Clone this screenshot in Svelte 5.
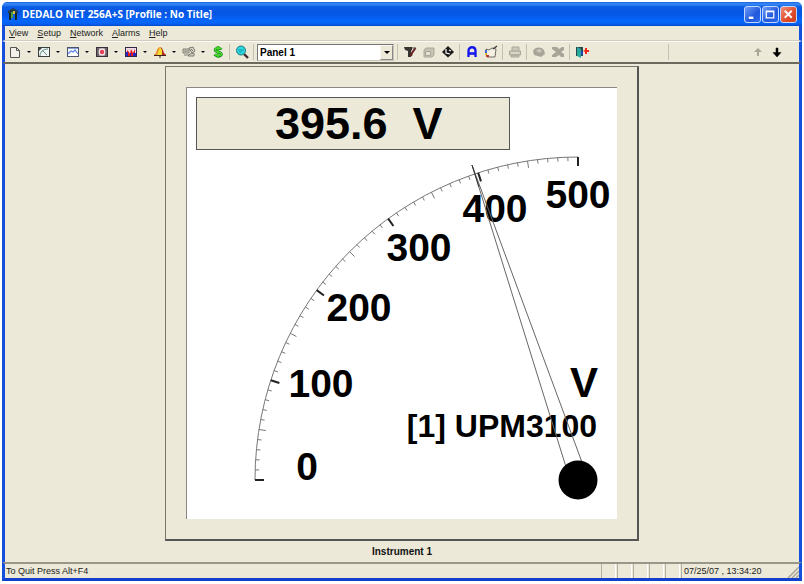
<script>
  const menus = ['View', 'Setup', 'Network', 'Alarms', 'Help'];
  const splits = ['page', 'meter', 'trend', 'scope', 'bars', 'bell', 'devices'];
  const panels = ['Panel 1', 'Panel 2', 'Panel 3'];
  let panel = $state('Panel 1');

  const cx = 578;
  const cy = 480;
  const r = 323;
  const labels = [
    { text: '0', x: 307, y: 480 },
    { text: '100', x: 321, y: 397 },
    { text: '200', x: 359, y: 321 },
    { text: '300', x: 419, y: 261 },
    { text: '400', x: 495, y: 222 },
    { text: '500', x: 578, y: 208 }
  ];
  const ticks = Array.from({ length: 51 }, (_, i) => {
    const a = (i / 50) * (Math.PI / 2);
    const major = i % 10 === 0;
    const len = major ? 9 : i % 5 === 0 ? 7 : 4;
    return {
      major,
      x1: cx - r * Math.cos(a),
      y1: cy - r * Math.sin(a),
      x2: cx - (r - len) * Math.cos(a),
      y2: cy - (r - len) * Math.sin(a)
    };
  });
</script>

{#snippet icon(name)}
  <svg class="icon" viewBox="0 0 14 14" aria-hidden="true">
    {#if name === 'page'}
      <path d="M2.500 2.500h6l3 3v7h-9z" fill="#f4f2e8" stroke="#555" />
      <path d="M8.500 2.500v3h3" fill="none" stroke="#555" />
    {:else if name === 'meter'}
      <rect x="1.5" y="2.5" width="11" height="9" fill="#f4f8f4" stroke="#3c4040" />
      <path d="M3 11C3 7 6 4 11 4M5 5l5 5" fill="none" stroke="#5b8a88" />
      <path d="M2 3h3L2 6z" fill="#444" />
    {:else if name === 'trend'}
      <rect x="1.5" y="2.5" width="11" height="9" fill="#fff" stroke="#4a5570" />
      <path d="M2 3.5h10" stroke="#8ca0d0" />
      <path d="M2 9l3-3 2 1 2-2 3 4" fill="none" stroke="#5a82e8" stroke-width="1.2" />
    {:else if name === 'scope'}
      <rect x="1.5" y="2.5" width="11" height="9" fill="#a09ba0" stroke="#3a3038" />
      <path d="M3 3v8M11 3v8" stroke="#3a3038" />
      <circle cx="7" cy="7" r="3.4" fill="#fbe8ea" />
      <circle cx="7" cy="7" r="2.2" fill="#e84058" />
    {:else if name === 'bars'}
      <rect x="1.5" y="2.5" width="11" height="9" fill="#f0d8e4" stroke="#302848" />
      <path d="M3 11V5l2 2 1 2 1-5 2 4 2-4v7z" fill="#e81818" />
      <path d="M2 7h2v4H2zM6 8h1v3H6zM9 8h3v3H9z" fill="#2828c0" />
    {:else if name === 'bell'}
      <path d="M7 2C4 3 4 6 3 8l-2 2h12l-2-2c-1-2-1-5-4-6z" fill="#f4dc30" />
      <path d="M7 2C4 3 4 6 3 8l-2 2h3z" fill="#e88a30" />
      <path d="M7 2c3 1 3 4 4 6l2 2H9V5z" fill="#b82828" />
      <path d="M1 10.500h12M6 12h2" stroke="#402020" />
    {:else if name === 'devices'}
      <path d="M1 4h6v4H1zM2 10h5M7 3l4-1 2 4-3 2zM8 9l4-1v3H6z" fill="#d8d5c5" stroke="#7c7c72" />
      <path d="M2 6h4M9 4l2 2" stroke="#7c7c72" />
    {:else if name === 'dollar'}
      <path d="M10.5 4.5C9.5 3 4 2.500 4 5s6.500 1.500 6.500 4.200S5 11.500 3.500 9.500M7 1v12" fill="none" stroke="#187828" stroke-width="2.600" />
      <path d="M10.5 4C9.500 2.500 4 2.500 4 5s6.500 1.500 6.500 4S5 11 3.500 9M7 1v12" fill="none" stroke="#48d828" stroke-width="1.500" />
    {:else if name === 'find'}
      <path d="M9 9l4 4" stroke="#402830" stroke-width="2.400" />
      <circle cx="6" cy="5.500" r="4.500" fill="#30d8e0" stroke="#187880" />
      <path d="M3 5h6M4 7h3" stroke="#0c9cac" />
    {:else if name === 'filter'}
      <path d="M1 2h8v3L8 6v6H5V6L2 5z" fill="#383430" />
      <path d="M12.500 3L9 8l-1 3" fill="none" stroke="#682020" stroke-width="2" />
      <path d="M9 3h4" stroke="#504840" />
    {:else if name === 'cube'}
      <path d="M2 5l2-2h8v7l-2 2H2z" fill="#c6c3b5" stroke="#aaa799" />
      <path d="M3.500 6.500h5v4h-5z" fill="#e4e1d2" stroke="#aaa799" />
    {:else if name === 'diamond'}
      <path d="M7 1l6 6-6 5.500L1 7z" fill="#181818" />
      <path d="M5 4v4l4 1M8 5l2 1" fill="none" stroke="#fff" stroke-width="1.200" />
    {:else if name === 'font'}
      <path d="M3.500 12V6c0-5 7-5 7 0v6M4 8.500h6" fill="none" stroke="#1414f0" stroke-width="2.300" />
    {:else if name === 'plot'}
      <path d="M2 4l3 1 3-2 4 1-1 8H3z" fill="#f4f1e4" stroke="#706c64" />
      <path d="M9 4l4-3" stroke="#404040" stroke-width="1.500" />
      <path d="M1 5h2v3H1z" fill="#3860d8" />
      <path d="M1 8h2v2H1z" fill="#e0b820" />
      <path d="M2 10h3v2H2z" fill="#c83828" />
    {:else if name === 'print'}
      <path d="M4 6V2h7v4M1.500 6h11v4h-11zM3 10h8v2H3z" fill="#cac7b9" stroke="#aaa799" />
      <path d="M3 8h8" stroke="#e8e5d6" />
    {:else if name === 'phone'}
      <path d="M1 6c1-4 8-5 11-1l1 4-4 3-7-2z" fill="#a8a598" />
      <path d="M4 6c2-2 4-2 6-1l-2 3z" fill="#cbc8ba" />
    {:else if name === 'cut'}
      <path d="M1 2h5l2 2 3-2h2v3l-3 2 3 2v3h-3L8 10l-3 2H1v-2l4-3-4-3z" fill="#a8a598" />
    {:else if name === 'exit'}
      <path d="M1 2h7v9H1z" fill="#284848" />
      <path d="M2 2l4 2v9l-4-2z" fill="#28a8a0" />
      <path d="M6 6h2v4H6z" fill="#2048b0" />
      <path d="M8 6l2-1V3h2v2h2v2h-2v2h-2V7z" fill="#f02818" />
    {:else if name === 'up'}
      <path d="M7 3L3 7h3v4h2V7h3z" fill="#aaa799" />
    {:else if name === 'down'}
      <path d="M7 12L3 7.500h3V3h2v4.500h3z" fill="#000" stroke="#000" stroke-width="0.500" />
    {/if}
  </svg>
{/snippet}

{#snippet tool(name)}
  <button class="tool" aria-label={name}>{@render icon(name)}</button>
{/snippet}

<div class="window">
  <header class="title">
    <svg class="logo" viewBox="0 0 12 14" aria-hidden="true">
      <path d="M1 4l5-3 5 3v2H1z" fill="#243c48" />
      <path d="M2 6h2v7H2zM8 6h2v7H8z" fill="#182820" />
      <path d="M4 5h2v6H4z" fill="#50a048" />
      <path d="M6 4h2v3H6z" fill="#d8c048" />
    </svg>
    <h1>DEDALO NET 256A+S [Profile : No Title]</h1>
    <div class="controls">
      <button aria-label="Minimize"><svg viewBox="0 0 16 16"><path d="M4 11.500h5" stroke="#fff" stroke-width="2.500" /></svg></button>
      <button aria-label="Maximize"><svg viewBox="0 0 16 16"><path d="M3.500 4.500h8v7h-8zM3.500 5h8" fill="none" stroke="#fff" stroke-width="1.300" /></svg></button>
      <button class="close" aria-label="Close"><svg viewBox="0 0 16 16"><path d="M4 4l7.500 7.500M11.500 4L4 11.500" stroke="#fff" stroke-width="2" /></svg></button>
    </div>
  </header>

  <nav class="menu">
    {#each menus as m}
      <button><u>{m[0]}</u>{m.slice(1)}</button>
    {/each}
  </nav>

  <div class="toolbar">
    {#each splits as s}
      {@render tool(s)}
      <button class="drop" aria-label="{s} options"><i></i></button>
    {/each}
    {@render tool('dollar')}
    <span class="sep"></span>
    {@render tool('find')}
    <span class="sep"></span>
    <div class="combo">
      <select aria-label="Panel" bind:value={panel}>
        {#each panels as p}<option>{p}</option>{/each}
      </select>
      <span class="arrow"><i></i></span>
    </div>
    <span class="sep"></span>
    {@render tool('filter')}
    {@render tool('cube')}
    {@render tool('diamond')}
    <span class="sep"></span>
    {@render tool('font')}
    {@render tool('plot')}
    <span class="sep"></span>
    {@render tool('print')}
    <span class="sep"></span>
    {@render tool('phone')}
    {@render tool('cut')}
    <span class="sep"></span>
    {@render tool('exit')}
    <div class="right">
      <span class="sep"></span>
      <div class="arrows">
        {@render tool('up')}
        {@render tool('down')}
      </div>
    </div>
  </div>

  <main>
    <section class="panel">
      <div class="dial">
        <svg viewBox="187 88 430 431" role="img" aria-label="Voltmeter">
          <rect x="196.500" y="97.500" width="313" height="52" fill="#ece9d8" stroke="#555" />
          <text class="readout" x="275" y="139">395.6&nbsp; V</text>
          <g fill="none" stroke="#777">
            <path d="M{cx - r} {cy}A{r} {r} 0 0 1 {cx} {cy - r}" />
            {#each ticks as t}
              <line class:major={t.major} x1={t.x1} y1={t.y1} x2={t.x2} y2={t.y2} />
            {/each}
          </g>
          {#each labels as l}
            <text class="num" x={l.x} y={l.y}>{l.text}</text>
          {/each}
          <text class="unit" x="584" y="397">V</text>
          <text class="name" x="502" y="437">[1] UPM3100</text>
          <path d="M566 467L472 165L583 465" fill="none" stroke="#666" />
          <path d="M472 165L479 187" stroke="#333" />
          <circle {cx} {cy} r="19.500" />
        </svg>
      </div>
    </section>
    <h2>Instrument 1</h2>
  </main>

  <footer>
    <span class="hint">To Quit Press Alt+F4</span>
    {#each Array(5) as _}<span class="cell"></span>{/each}
    <span class="clock">07/25/07 , 13:34:20</span>
    <svg class="grip" viewBox="0 0 12 12" aria-hidden="true">
      <path d="M1 12L12 1M5 12l7-7M9 12l3-3" stroke="#aaa799" stroke-width="1.500" />
    </svg>
  </footer>
</div>

<style>
  :global(body) {
    background: #fff;
  }
  .window {
    box-sizing: border-box;
    height: 100vh;
    padding: 2px 2px 3px;
    display: flex;
    flex-direction: column;
    font: 9px/12px 'Liberation Sans', Arial, sans-serif;
    color: #222;
  }
  button {
    padding: 0;
    border: 0;
    background: none;
    font: inherit;
    color: inherit;
  }
  svg {
    display: block;
  }
  .title {
    height: 24px;
    flex: none;
    display: flex;
    align-items: center;
    padding: 0 5px;
    border-radius: 5px 5px 0 0;
    background: linear-gradient(#1660e0 0, #3a8cf8 2px, #0a5ae4 5px, #0456e4 12px, #0666fc 19px, #0560f0 22px, #0347c8);
  }
  .logo {
    width: 12px;
    height: 14px;
    margin-right: 3px;
  }
  h1 {
    flex: 1;
    margin: 0;
    font: bold 10px/14px 'Open Sans', 'Noto Sans', sans-serif;
    color: #fff;
  }
  .controls {
    display: flex;
    gap: 1px;
  }
  .controls button {
    box-sizing: border-box;
    width: 17px;
    height: 17px;
    border: 1px solid #c4d8fc;
    border-radius: 3px;
    background: linear-gradient(135deg, #6c9cf8, #2258dc 60%, #2c6cf0);
  }
  .controls .close {
    background: linear-gradient(135deg, #f09078, #e04a28 60%, #d04020);
  }
  .menu,
  .toolbar,
  main,
  footer {
    border: solid #1450dc;
    border-width: 0 3px;
    background: #ece9d8;
  }
  .menu {
    flex: none;
    height: 14px;
    display: flex;
    align-items: center;
    gap: 9px;
    padding-left: 4px;
    border-bottom: 1px solid #d0cdc0;
  }
  .toolbar {
    flex: none;
    height: 20px;
    display: flex;
    align-items: center;
    border-top: 1px solid #fbfaf4;
  }
  .tool {
    flex: none;
    width: 19px;
    height: 16px;
    display: flex;
    align-items: center;
    justify-content: center;
  }
  .icon {
    width: 14px;
    height: 14px;
  }
  .drop {
    flex: none;
    width: 10px;
    height: 16px;
    display: flex;
    align-items: center;
    justify-content: center;
  }
  i {
    border: solid transparent;
    border-width: 2px 2px 0;
    border-top-color: #000;
  }
  .sep {
    flex: none;
    width: 1px;
    height: 16px;
    margin: 0 2px;
    background: #c4c1b2;
  }
  .combo {
    flex: none;
    box-sizing: border-box;
    width: 137px;
    height: 17px;
    margin: 0 1px;
    display: flex;
    border: 1px solid;
    border-color: #777 #c8c5b8 #c8c5b8 #777;
    background: #fff;
  }
  select {
    flex: 1;
    appearance: none;
    border: 0;
    padding: 0 2px;
    background: none;
    color: #000;
    font: bold 10px/15px 'Liberation Sans', sans-serif;
  }
  .arrow {
    width: 11px;
    display: flex;
    align-items: center;
    justify-content: center;
    border: 1px solid;
    border-color: #f8f6ee #888 #888 #f8f6ee;
    background: #ece9d8;
    pointer-events: none;
  }
  .arrow i {
    border-width: 3px 3px 0;
  }
  .right {
    flex: 0 0 133px;
    margin-left: auto;
    display: flex;
    align-items: center;
    justify-content: space-between;
  }
  .arrows {
    display: flex;
    padding-right: 13px;
  }
  main {
    flex: 1;
    display: flex;
    flex-direction: column;
    align-items: center;
    padding-top: 2px;
    border-top: 2px solid #6c6a5c;
  }
  .panel {
    box-sizing: border-box;
    width: 59vw;
    max-width: calc(100vh - 110px);
    padding: 20px;
    border: 1px solid #77756c;
    border-right: 2px solid #555;
    border-bottom: 2px solid #555;
  }
  .dial {
    border-top: 1px solid #888;
    border-left: 1px solid #888;
    background: #fff;
  }
  .dial text {
    font-family: 'Liberation Sans', sans-serif;
    font-weight: bold;
    fill: #000;
  }
  .readout {
    font-size: 45px;
  }
  .num,
  .unit,
  .name {
    text-anchor: middle;
  }
  .num {
    font-size: 39px;
  }
  .unit {
    font-size: 42px;
  }
  .dial .name {
    font-size: 32px;
  }
  .major {
    stroke: #222;
    stroke-width: 2px;
  }
  h2 {
    margin: 5px 0 0;
    font: bold 10px/12px 'Liberation Sans', sans-serif;
    color: #111;
  }
  footer {
    flex: none;
    height: 14px;
    display: flex;
    align-items: stretch;
    line-height: 14px;
    border-top: 2px solid #99978a;
    border-bottom: 3px solid #1040cc;
  }
  .hint {
    flex: 1;
    padding-left: 1px;
  }
  .cell {
    box-sizing: border-box;
    width: 15px;
    margin-right: 1px;
    border-left: 1px solid #b4b1a2;
    border-right: 1px solid #fff;
  }
  .clock {
    box-sizing: border-box;
    width: 106px;
    padding-left: 2px;
    border-left: 1px solid #b4b1a2;
  }
  .grip {
    width: 12px;
    height: 12px;
    align-self: end;
  }
</style>
